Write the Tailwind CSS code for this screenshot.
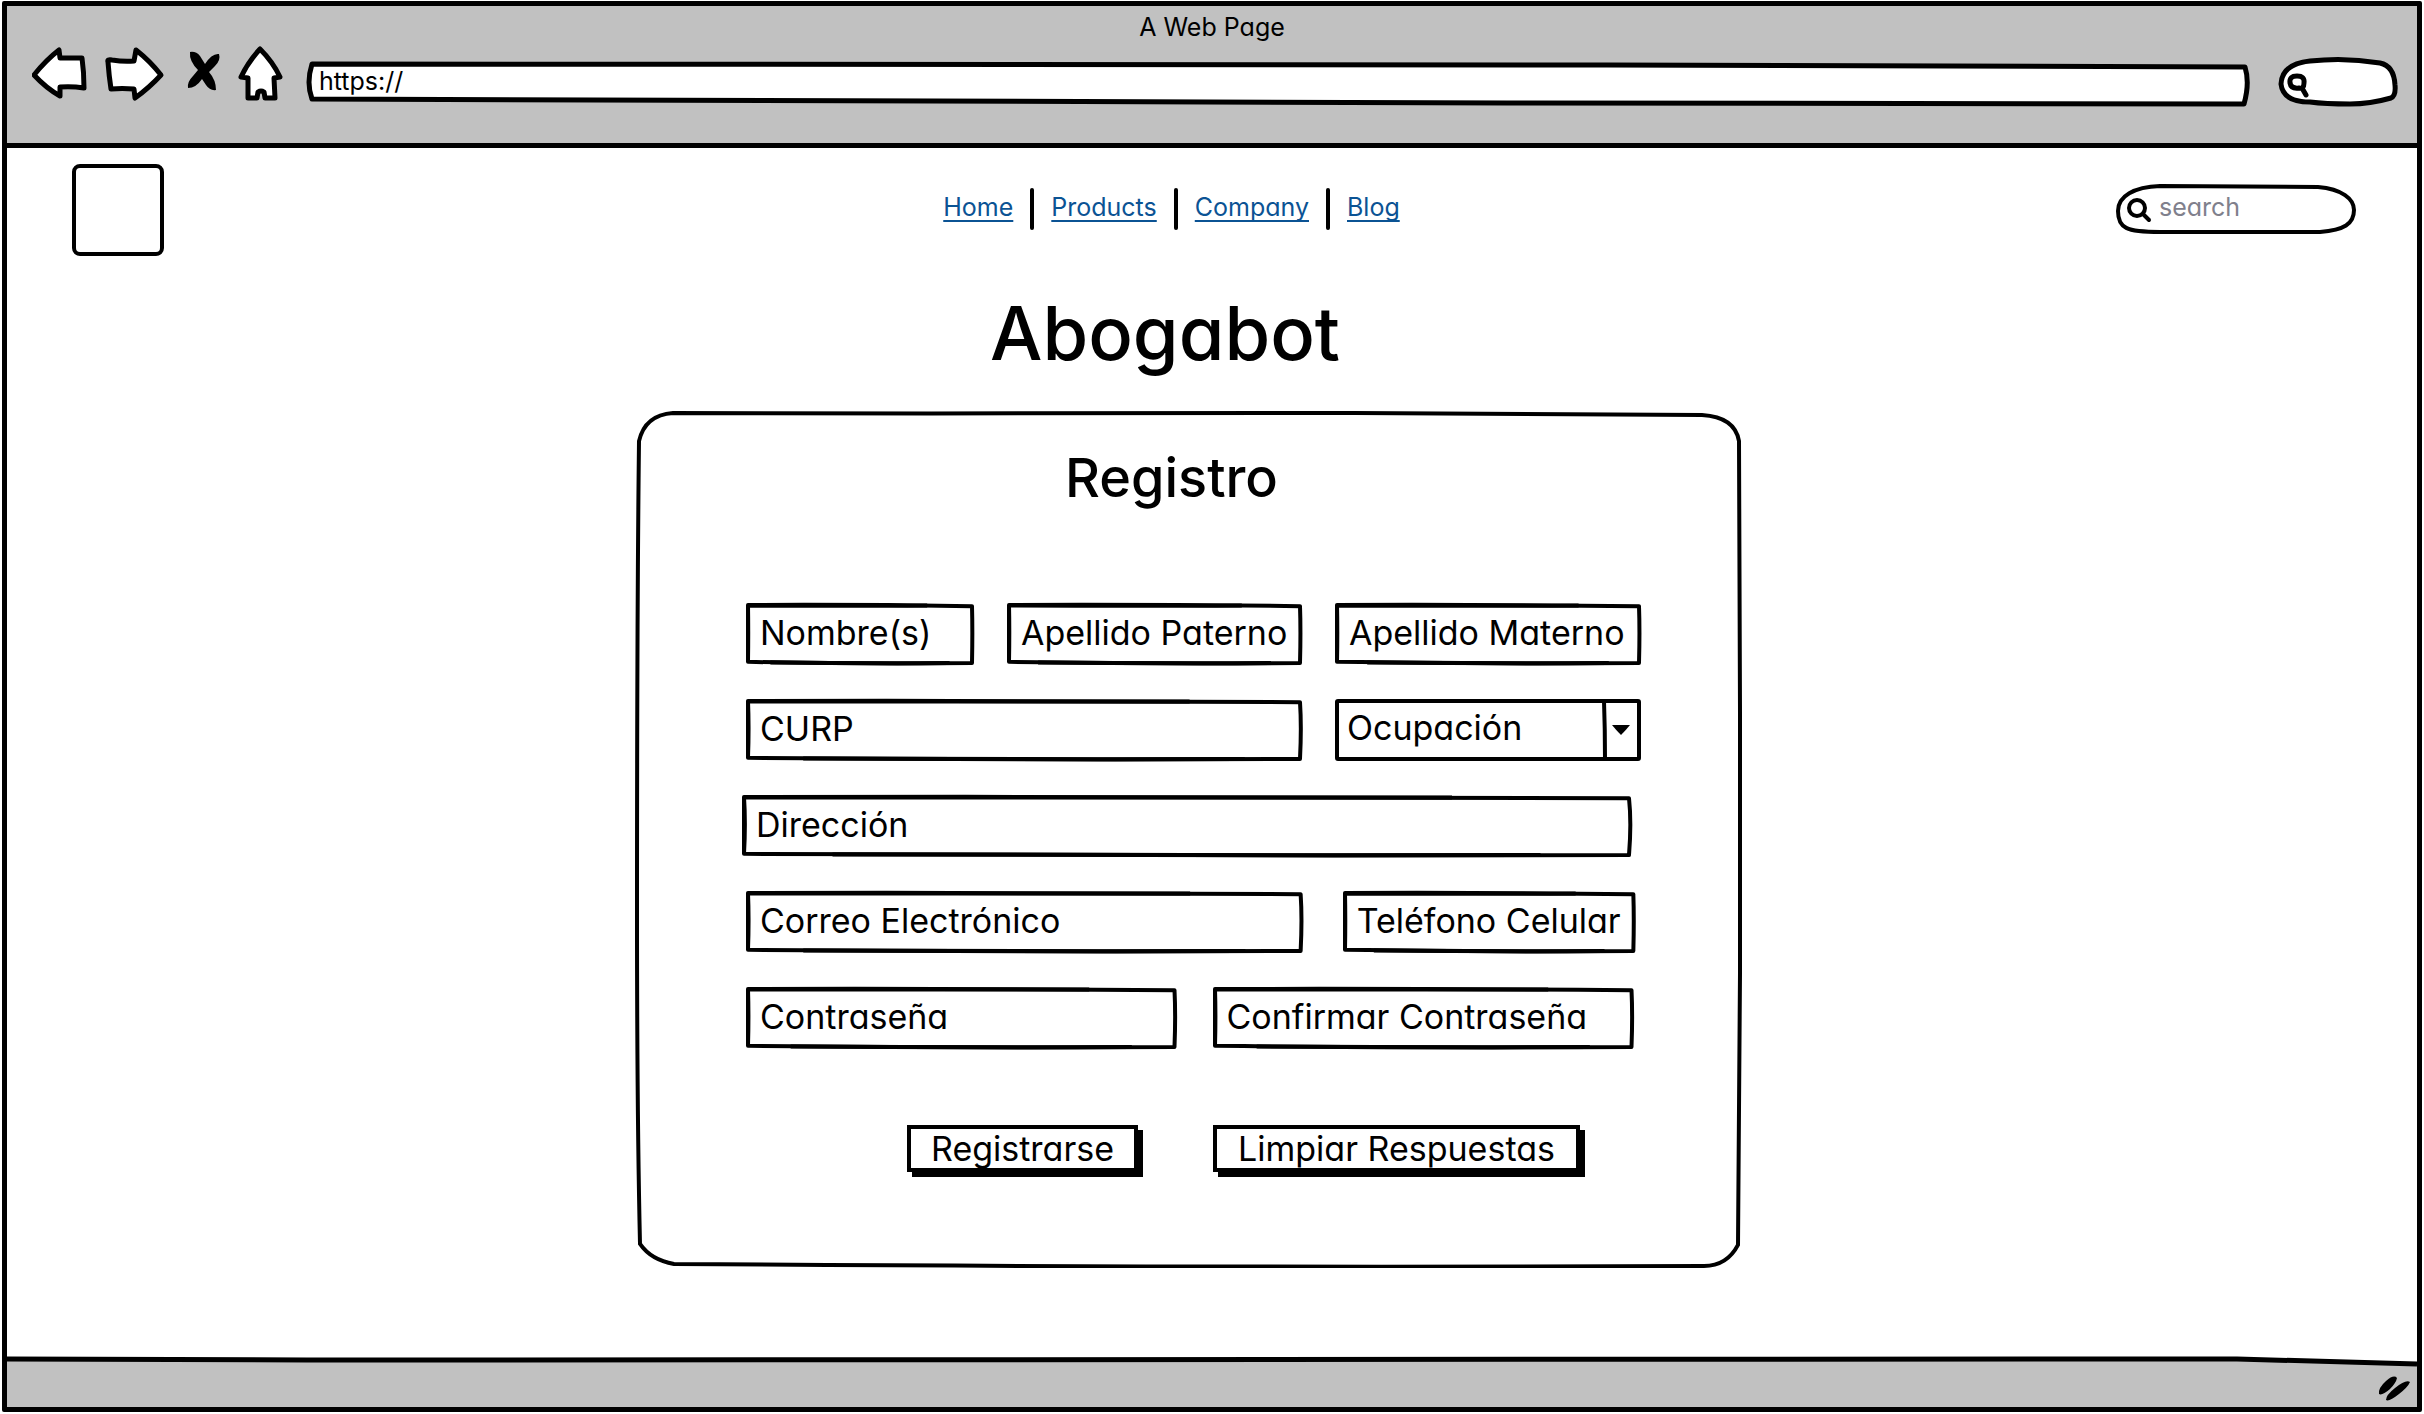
<!DOCTYPE html>
<html lang="es">
<head>
<meta charset="utf-8">
<meta name="viewport" content="width=device-width, initial-scale=1">
<title>Abogabot - Registro</title>
<script src="https://cdn.jsdelivr.net/npm/@tailwindcss/browser@4"></script>
</head>
<body class="bg-white text-black font-[Inter,sans-serif] [font-feature-settings:'cv11']">
<!-- Shared hand-drawn outline for text fields -->
<svg class="hidden" aria-hidden="true">
  <symbol id="box" viewBox="0 0 100 100" preserveAspectRatio="none" overflow="visible">
    <g fill="none" stroke="#000" stroke-width="4" stroke-linejoin="round">
      <path vector-effect="non-scaling-stroke" d="M0 0Q50 -1 100 2Q100.3 45 100 100Q50 102 0 98Q0.2 45 0 0Z"/>
      <path vector-effect="non-scaling-stroke" d="M0 1Q45 2 80 1M0 0V98M10 99Q50 101 90 100"/>
    </g>
  </symbol>
</svg>

<div class="flex min-h-screen flex-col px-[2px] pt-px pb-[2px]">
<div class="flex grow flex-col border-[5px] border-black rounded-[2px]">

  <header class="border-b-[5px] border-black bg-[#c1c1c1] pt-[7px] pb-9">
    <p class="text-center text-[25px] leading-7">A Web Page</p>
    <div class="flex h-[66px] items-end gap-4 pl-[25px] pr-[18px]">
      <button type="button" aria-label="Back"><svg class="block h-[62px] w-14" viewBox="32 45 56 62" fill="#fff" stroke="#000" stroke-width="5" stroke-linejoin="round"><path d="M34 75Q46 60 59 50L60 58Q72 58 82 58Q84 72 84 88Q72 86 60 87L60 96Q46 88 34 75Z"/></svg></button>
      <button type="button" aria-label="Forward"><svg class="block h-[62px] w-16" viewBox="104 45 64 62" fill="#fff" stroke="#000" stroke-width="5" stroke-linejoin="round"><path d="M108 62Q107 59 112 60Q124 62 134 61L136 50Q150 61 161 75Q149 88 135 98L134 89Q122 88 111 89Q109 76 108 62Z"/></svg></button>
      <button type="button" aria-label="Stop"><svg class="block h-[62px] w-[38px]" viewBox="184 45 38 62"><path d="M190 52Q196 51 200 56L205 64Q212 53 219 54Q221 60 215 66L209 72Q216 80 216 90Q210 91 206 85L202 79Q196 88 188 88Q187 82 193 76L198 70Q189 61 190 52Z"/></svg></button>
      <button type="button" aria-label="Home"><svg class="block h-[62px] w-12" viewBox="238 45 48 62" fill="#fff" stroke="#000" stroke-width="5" stroke-linejoin="round"><path d="M260 49Q248 62 241 77L248 78L248 98L257 98L258 92Q261 90 264 92L265 98L275 98L274 78L280 77Q273 62 260 49Z"/></svg></button>
      <div class="relative ml-[5px] h-[46px] grow">
        <svg class="absolute inset-0 h-full w-full overflow-visible" viewBox="0 0 1943 46" preserveAspectRatio="none" aria-hidden="true"><path d="M5 3Q700 2 1300 4T1938 6Q1943 22 1937 43Q1600 43 1200 42T5 38Q-1 22 5 3Z" fill="#fff" stroke="#000" stroke-width="5" stroke-linejoin="round"/></svg>
        <input type="text" aria-label="Address" value="https://" class="relative h-[40px] w-full bg-transparent px-3 text-[25px] outline-none">
      </div>
      <div class="relative ml-[13px] h-[50px] w-[120px] shrink-0">
        <svg class="absolute inset-0 h-full w-full overflow-visible" viewBox="2279 57 120 50" aria-hidden="true"><path d="M2281 84Q2282 64 2310 61Q2345 57 2380 63Q2394 66 2395 85Q2396 96 2391 98Q2370 104 2350 104Q2325 104 2310 102Q2283 102 2281 84Z" fill="#fff" stroke="#000" stroke-width="5" stroke-linejoin="round"/><path d="M2290 83Q2289 76 2297 76Q2305 76 2304 83Q2304 89 2299 88Q2291 89 2290 83ZM2302 88L2306 95" fill="none" stroke="#000" stroke-width="5" stroke-linecap="round"/></svg>
        <input type="search" aria-label="Browser search" class="relative h-full w-full bg-transparent pl-8 pr-3 text-xl outline-none">
      </div>
    </div>
  </header>

  <main class="grow pb-20">
    <div class="flex items-start pt-4 pr-[61px] pl-[65px]">
      <a href="#" aria-label="Logo" class="block size-[92px] rounded-lg border-4 border-black"></a>
      <nav class="flex grow items-center justify-center gap-[17px] pt-6 pl-[63px] text-[25px] leading-[38px] text-[#0b5394]">
        <a href="#" class="pb-1 underline decoration-2 underline-offset-4 [text-decoration-skip-ink:none]">Home</a>
        <span class="h-[42px] w-1 rounded bg-black"></span>
        <a href="#" class="pb-1 underline decoration-2 underline-offset-4 [text-decoration-skip-ink:none]">Products</a>
        <span class="h-[42px] w-1 rounded bg-black"></span>
        <a href="#" class="pb-1 underline decoration-2 underline-offset-4 [text-decoration-skip-ink:none]">Company</a>
        <span class="h-[42px] w-1 rounded bg-black"></span>
        <a href="#" class="pb-1 underline decoration-2 underline-offset-4 [text-decoration-skip-ink:none]">Blog</a>
      </nav>
      <div class="relative mt-5 h-[50px] w-[240px]">
        <svg class="absolute inset-0 h-full w-full" viewBox="0 0 240 50" fill="none" stroke="#000" stroke-width="4" aria-hidden="true"><path d="M2 27C2 12 18 3 44 2L202 3C226 5 238 15 238 26C238 40 228 46 204 48L44 48C10 48 2 44 2 27Z"/><circle cx="21" cy="24" r="8"/><path d="M27 30L33 36" stroke-linecap="round"/></svg>
        <input type="search" aria-label="Search" placeholder="search" class="relative h-[46px] w-full bg-transparent pr-4 pl-[43px] text-[25px] outline-none placeholder:text-[#80808c]">
      </div>
    </div>

    <h1 class="mt-[34px] pr-[94px] text-center text-[74px] leading-[86px] font-medium">Abogabot</h1>

    <div class="mt-[35px] flex justify-center pr-[47px]">
      <section class="relative w-full max-w-[1107px] pt-8 pb-24">
        <svg class="absolute inset-0 h-full w-full" viewBox="0 0 1107 854" preserveAspectRatio="none" fill="none" stroke="#000" stroke-width="4" aria-hidden="true"><path d="M38 2C260 4 560 0 720 2L1067 4Q1100 6 1104 30L1105 300L1105 560L1103 831Q1092 852 1069 852Q600 854 39 850Q16 846 5 830Q2 700 2 500Q2 200 4 30Q10 4 38 2Z"/></svg>
        <div class="relative">
          <h2 class="pr-[34px] text-center text-[54px] leading-[70px] font-medium">Registro</h2>
          <form class="mt-[90px] flex flex-col gap-[34px] pr-[101px] pl-[111px]">
            <div class="grid grid-cols-[228fr_295fr_306fr] gap-[33px]">
              <div class="relative h-[62px]"><svg class="absolute inset-[2px] h-[58px] w-[calc(100%-4px)] overflow-visible" aria-hidden="true"><use href="#box"/></svg><input type="text" aria-label="Nombre(s)" placeholder="Nombre(s)" class="relative h-[58px] w-full bg-transparent pl-[14px] text-[34px] outline-none placeholder:text-black"></div>
              <div class="relative h-[62px]"><svg class="absolute inset-[2px] h-[58px] w-[calc(100%-4px)] overflow-visible" aria-hidden="true"><use href="#box"/></svg><input type="text" aria-label="Apellido Paterno" placeholder="Apellido Paterno" class="relative h-[58px] w-full bg-transparent pl-[14px] text-[34px] outline-none placeholder:text-black"></div>
              <div class="relative h-[62px]"><svg class="absolute inset-[2px] h-[58px] w-[calc(100%-4px)] overflow-visible" aria-hidden="true"><use href="#box"/></svg><input type="text" aria-label="Apellido Materno" placeholder="Apellido Materno" class="relative h-[58px] w-full bg-transparent pl-[14px] text-[34px] outline-none placeholder:text-black"></div>
            </div>
            <div class="grid grid-cols-[556fr_306fr] gap-[33px]">
              <div class="relative h-[62px]"><svg class="absolute inset-[2px] h-[58px] w-[calc(100%-4px)] overflow-visible" aria-hidden="true"><use href="#box"/></svg><input type="text" aria-label="CURP" placeholder="CURP" class="relative h-[58px] w-full bg-transparent pl-[14px] text-[34px] outline-none placeholder:text-black"></div>
              <div class="relative h-[62px]">
                <select aria-label="Ocupación" class="h-full w-full appearance-none rounded-[3px] border-4 border-black bg-white pb-1 pl-2 text-[34px] leading-[50px] outline-none"><option>Ocupación</option></select>
                <svg class="pointer-events-none absolute top-0 right-0 h-[62px] w-10" viewBox="0 0 40 62" aria-hidden="true"><path d="M3 2Q4 30 4 60" fill="none" stroke="#000" stroke-width="4"/><path d="M11 26Q20 26 29 26Q25 31 20 36Q15 31 11 26Z"/></svg>
              </div>
            </div>
            <div class="-ml-1 pr-[10px]">
              <div class="relative h-[62px]"><svg class="absolute inset-[2px] h-[58px] w-[calc(100%-4px)] overflow-visible" aria-hidden="true"><use href="#box"/></svg><input type="text" aria-label="Dirección" placeholder="Dirección" class="relative h-[58px] w-full bg-transparent pl-[14px] text-[34px] outline-none placeholder:text-black"></div>
            </div>
            <div class="grid grid-cols-[556fr_292fr] gap-10 pr-[6px]">
              <div class="relative h-[62px]"><svg class="absolute inset-[2px] h-[58px] w-[calc(100%-4px)] overflow-visible" aria-hidden="true"><use href="#box"/></svg><input type="email" aria-label="Correo Electrónico" placeholder="Correo Electrónico" class="relative h-[58px] w-full bg-transparent pl-[14px] text-[34px] outline-none placeholder:text-black"></div>
              <div class="relative h-[62px]"><svg class="absolute inset-[2px] h-[58px] w-[calc(100%-4px)] overflow-visible" aria-hidden="true"><use href="#box"/></svg><input type="tel" aria-label="Teléfono Celular" placeholder="Teléfono Celular" class="relative h-[58px] w-full bg-transparent pl-[14px] text-[34px] outline-none placeholder:text-black"></div>
            </div>
            <div class="grid grid-cols-[430fr_420fr] gap-9 pr-2">
              <div class="relative h-[62px]"><svg class="absolute inset-[2px] h-[58px] w-[calc(100%-4px)] overflow-visible" aria-hidden="true"><use href="#box"/></svg><input type="password" aria-label="Contraseña" placeholder="Contraseña" class="relative h-[58px] w-full bg-transparent pl-[14px] text-[34px] outline-none placeholder:text-black"></div>
              <div class="relative h-[62px]"><svg class="absolute inset-[2px] h-[58px] w-[calc(100%-4px)] overflow-visible" aria-hidden="true"><use href="#box"/></svg><input type="password" aria-label="Confirmar Contraseña" placeholder="Confirmar Contraseña" class="relative h-[58px] w-full bg-transparent pl-[14px] text-[34px] outline-none placeholder:text-black"></div>
            </div>
            <div class="mt-[42px] flex gap-[75px] pl-[161px]">
              <button type="submit" class="h-[47px] w-[231px] border-4 border-black bg-white text-[34px] leading-[39px] shadow-[5px_5px_0_#000]">Registrarse</button>
              <button type="reset" class="h-[47px] w-[367px] border-4 border-black bg-white text-[34px] leading-[39px] shadow-[5px_5px_0_#000]">Limpiar Respuestas</button>
            </div>
          </form>
        </div>
      </section>
    </div>
  </main>

  <footer class="relative flex h-[51px] items-end justify-end">
    <svg class="absolute inset-0 h-full w-full" viewBox="0 0 2410 51" preserveAspectRatio="none" aria-hidden="true"><path d="M0 3Q100 4 300 4L2230 3L2410 8V51H0Z" fill="#c1c1c1"/><path d="M0 3Q100 4 300 4L2230 3L2410 8" fill="none" stroke="#000" stroke-width="5"/></svg>
    <svg class="relative mr-1 mb-1 h-[30px] w-9" viewBox="0 0 36 30" aria-hidden="true"><path d="M2 21Q1 15 9 8Q17 1 20 5Q19 10 13 16Q5 23 2 21ZM9 27Q9 22 18 15Q29 6 33 9Q31 14 22 21Q12 29 9 27Z"/></svg>
  </footer>
</div>
</div>
</body>
</html>
